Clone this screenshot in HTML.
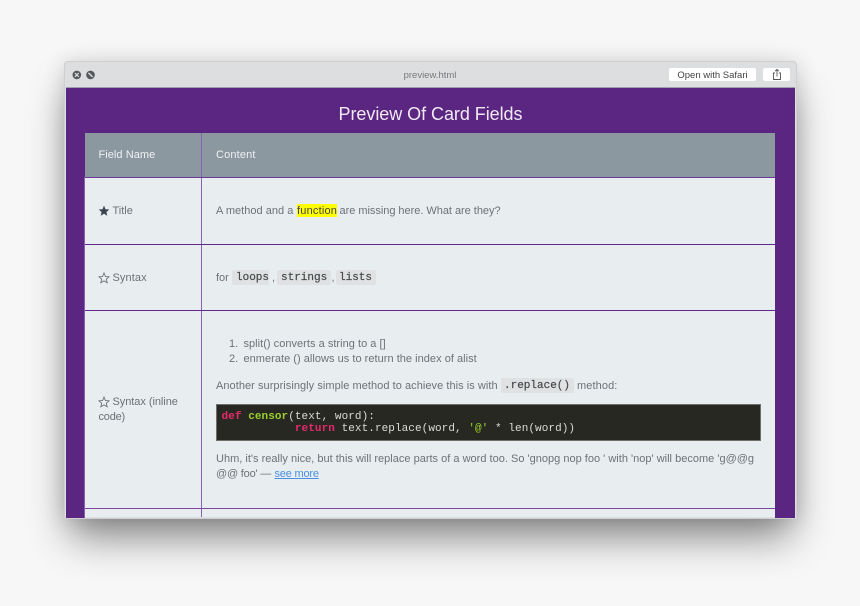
<!DOCTYPE html>
<html><head><meta charset="utf-8">
<style>
html,body{margin:0;padding:0;width:860px;height:606px;overflow:hidden;background:#f7f7f7}
body{position:relative;font-family:"Liberation Sans",sans-serif;filter:blur(.3px)}
div{position:absolute;white-space:nowrap}
.t{font-size:11px;line-height:14px;color:#6c7276}
.m{font-family:"Liberation Mono",monospace;color:#45494b;-webkit-text-stroke:.2px #45494b}
.c{height:15px;background:#dfe1e2;border-radius:2px}
.v{background:#8a5fb0}
.h{background:#5f2c8c}
pre{margin:0;font-family:"Liberation Mono",monospace;font-size:11px;line-height:12.500px;letter-spacing:.07px;color:#dcdcd4}
</style></head>
<body>
<div style="left:64px;top:61px;width:733px;height:458px;background:#dddee0;border-radius:4px 4px 1px 1px;box-shadow:0 24px 38px -6px rgba(0,0,0,.46),0 0 22px rgba(0,0,0,.13),inset 0 0 0 1px #cfcfd1"></div>
<div style="left:66px;top:87px;width:729px;height:1px;background:#a39fae"></div>
<div style="left:66px;top:88px;width:729px;height:430px;background:#5a2682"></div>

<svg style="position:absolute;left:71px;top:69px" width="26" height="12" viewBox="0 0 26 12">
<circle cx="5.8" cy="5.9" r="4.300" fill="#55585c"/><path d="M3.900 4l3.800 3.800M7.700 4L3.900 7.800" stroke="#dddee0" stroke-width="1.200"/>
<circle cx="19.500" cy="5.900" r="4.300" fill="#55585c"/><path d="M17.500 3.900l4 4" stroke="#dddee0" stroke-width="1.500"/>
</svg>
<div style="left:330px;top:69px;width:200px;text-align:center;font-size:9.500px;line-height:13px;color:#77797c">preview.html</div>
<div style="left:669px;top:68px;width:87px;height:13px;background:#fff;border-radius:2px"></div>
<div style="left:669px;top:68px;width:87px;text-align:center;font-size:9.500px;line-height:15px;color:#444">Open with Safari</div>
<div style="left:763px;top:68px;width:27px;height:13px;background:#fff;border-radius:2px"></div>
<svg style="position:absolute;left:771px;top:68px" width="12" height="13" viewBox="0 0 12 13" fill="none" stroke="#555" stroke-width=".9">
<path d="M4 5H2.500v6.500h7V5H8M6 8.500V1.500M4.200 3.200L6 1.400l1.800 1.800"/></svg>

<div style="left:66px;top:103px;width:729px;text-align:center;font-size:18px;line-height:22px;color:#f0e9f4;letter-spacing:-.05px">Preview Of Card Fields</div>

<div style="left:85px;top:133px;width:690px;height:44px;background:#8b98a0"></div>
<div style="left:85px;top:177px;width:690px;height:341px;background:#e8edf0"></div>
<div class="v" style="left:84px;top:177px;width:1px;height:341px"></div>
<div class="v" style="left:201px;top:133px;width:1px;height:385px"></div>
<div class="h" style="left:85px;top:177px;width:690px;height:1.400px;background:#6a3a98"></div>
<div class="h" style="left:85px;top:243.500px;width:690px;height:1.300px"></div>
<div class="h" style="left:85px;top:310px;width:690px;height:1.300px"></div>
<div class="h" style="left:85px;top:507.500px;width:690px;height:1.300px;background:#7a479e"></div>
<div style="left:85px;top:517px;width:690px;height:1px;background:#dcdfe2"></div>

<div class="t" style="left:98.500px;top:148px;color:#eef1f3;letter-spacing:.05px">Field Name</div>
<div class="t" style="left:216px;top:148px;color:#eef1f3;letter-spacing:.15px">Content</div>

<svg style="position:absolute;left:98px;top:204.500px" width="12" height="12" viewBox="0 0 12 12"><path d="M6 .600l1.500 3.600 3.900.300-3 2.500.900 3.800L6 8.800 2.700 10.800l.900-3.800-3-2.500 3.900-.300z" fill="#3a4350"/></svg>
<div class="t" style="left:112.500px;top:204px">Title</div>

<div class="t" style="left:216px;top:204px;letter-spacing:.02px">A method and a</div>
<div style="left:297px;top:204px;width:40px;height:13px;background:#ffff00"></div>
<div class="t" style="left:297px;top:204px;letter-spacing:.2px;color:#444">function</div>
<div class="t" style="left:339.500px;top:204px;letter-spacing:-.03px">are missing here. What are they?</div>

<svg style="position:absolute;left:98px;top:271.500px" width="12" height="12" viewBox="0 0 12 12"><path d="M6 1l1.400 3.500 3.700.300-2.800 2.400.900 3.600L6 8.900l-3.200 1.900.900-3.600L.900 4.800l3.700-.300z" fill="none" stroke="#5f666b" stroke-width=".8"/></svg>
<div class="t" style="left:112.500px;top:271px;letter-spacing:.1px">Syntax</div>

<div class="t" style="left:216px;top:271px">for</div>
<div class="c" style="left:232px;top:270px;width:37px"></div>
<div class="c" style="left:277px;top:270px;width:54px"></div>
<div class="c" style="left:336px;top:270px;width:40px"></div>
<div class="t m" style="left:236px;top:271px">loops</div>
<div class="t" style="left:272px;top:271px">,</div>
<div class="t m" style="left:281px;top:271px">strings</div>
<div class="t" style="left:331.500px;top:271px">,</div>
<div class="t m" style="left:339px;top:271px">lists</div>

<svg style="position:absolute;left:98px;top:395.500px" width="12" height="12" viewBox="0 0 12 12"><path d="M6 1l1.400 3.500 3.700.300-2.800 2.400.900 3.600L6 8.900l-3.200 1.900.900-3.600L.900 4.800l3.700-.300z" fill="none" stroke="#5f666b" stroke-width=".8"/></svg>
<div class="t" style="left:112.500px;top:395px;letter-spacing:-.05px">Syntax (inline</div>
<div class="t" style="left:98.500px;top:410px;letter-spacing:-.2px">code)</div>

<div class="t" style="left:229px;top:337px">1.</div>
<div class="t" style="left:243.500px;top:337px;letter-spacing:.03px">split() converts a string to a []</div>
<div class="t" style="left:229px;top:352px">2.</div>
<div class="t" style="left:243.500px;top:352px;letter-spacing:.03px">enmerate () allows us to return the index of alist</div>

<div class="t" style="left:216px;top:379px;letter-spacing:.05px">Another surprisingly simple method to achieve this is with</div>
<div class="c" style="left:501px;top:378px;width:73px"></div>
<div class="t m" style="left:504px;top:379px">.replace()</div>
<div class="t" style="left:577px;top:379px;letter-spacing:.1px">method:</div>

<div style="left:216px;top:404px;width:545px;height:37px;background:#272822;box-shadow:inset 0 0 0 1px #6e6f6a"></div>
<pre style="position:absolute;left:221.500px;top:410.500px"><span style="color:#e8286e;font-weight:bold">def</span> <span style="color:#9ccf2c;font-weight:bold">censor</span>(text, word):
           <span style="color:#e8286e;font-weight:bold">return</span> text.replace(word, <span style="color:#9ccf2c">'@'</span> * len(word))</pre>

<div class="t" style="left:216px;top:452px;letter-spacing:.01px">Uhm, it's really nice, but this will replace parts of a word too. So 'gnopg nop foo ' with 'nop' will become 'g@@g</div>
<div class="t" style="left:216px;top:467px;letter-spacing:-.2px">@@ foo' —</div>
<div class="t" style="left:274.500px;top:467px;color:#4a90e2;text-decoration:underline;letter-spacing:-.2px">see more</div>
</body></html>
